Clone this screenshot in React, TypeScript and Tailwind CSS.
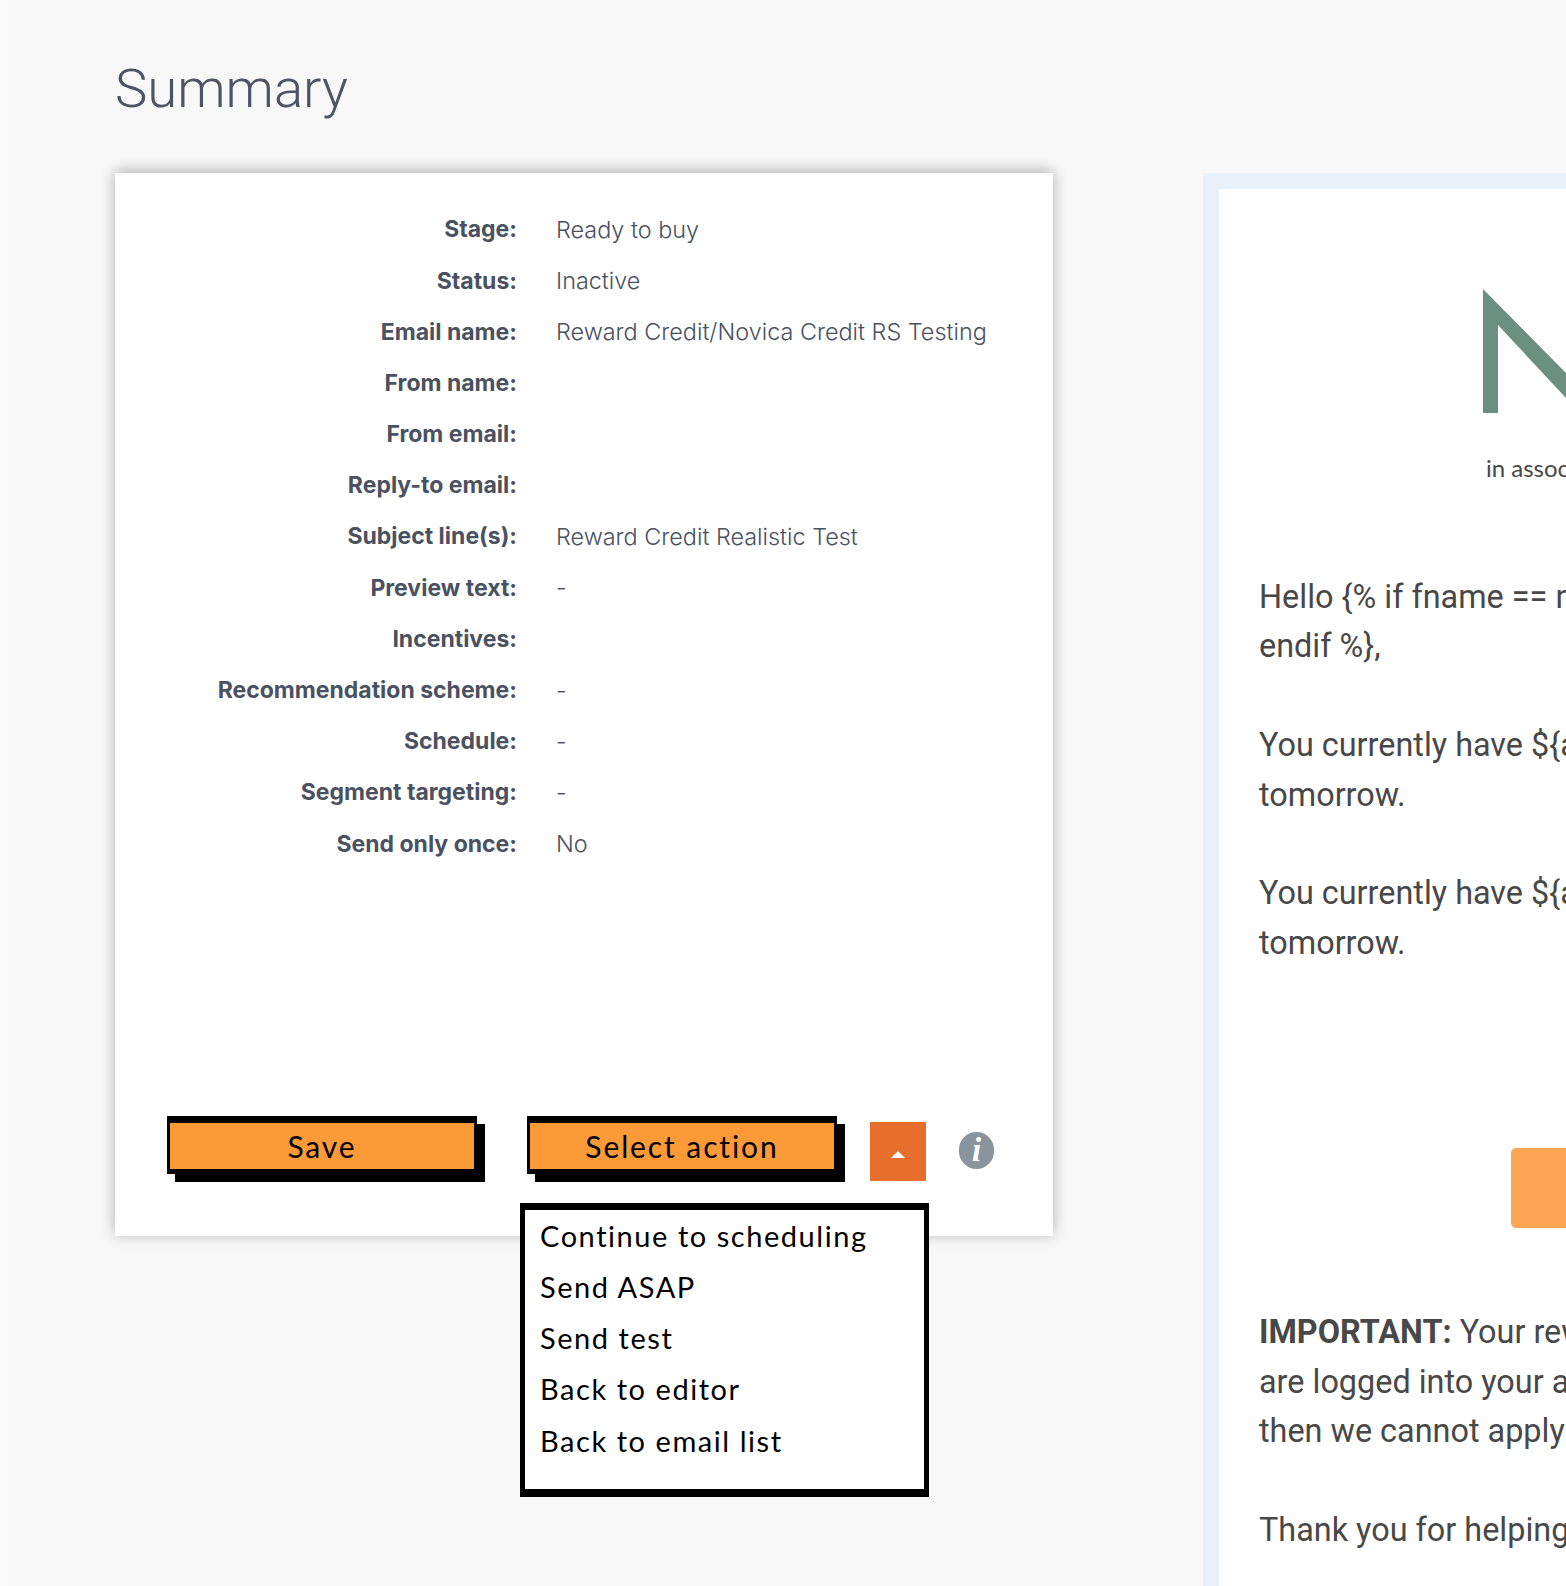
const rows = [
  { label: 'Stage:', value: 'Ready to buy' },
  { label: 'Status:', value: 'Inactive' },
  { label: 'Email name:', value: 'Reward Credit/Novica Credit RS Testing' },
  { label: 'From name:', value: '' },
  { label: 'From email:', value: '' },
  { label: 'Reply-to email:', value: '' },
  { label: 'Subject line(s):', value: 'Reward Credit Realistic Test' },
  { label: 'Preview text:', value: '-' },
  { label: 'Incentives:', value: '' },
  { label: 'Recommendation scheme:', value: '-' },
  { label: 'Schedule:', value: '-' },
  { label: 'Segment targeting:', value: '-' },
  { label: 'Send only once:', value: 'No' },
]

const actions = ['Continue to scheduling', 'Send ASAP', 'Send test', 'Back to editor', 'Back to email list']

function SketchButton({ label, width }: { label: string; width: string }) {
  return (
    <button
      className={`flex h-[58px] ${width} items-center justify-center border-x-[3px] border-t-[7px] border-b-[5px] border-black bg-[#fb9a37] font-['Lato',sans-serif] text-[30px] tracking-[1.9px] text-black shadow-[8px_8px_0_#000]`}
    >
      {label}
    </button>
  )
}

function SummaryCard() {
  return (
    <div className="relative flex h-[1063px] w-[938px] shrink-0 flex-col bg-white pt-[31px] pb-[55px] shadow-[0_-2px_14px_rgba(0,0,0,0.3)]">
      {rows.map((row) => (
        <div key={row.label} className="flex h-[51.2px] items-center">
          <span className="w-[402px] text-right text-[23px] font-bold text-[#4a5160]">{row.label}</span>
          <span className="ml-[39px] text-[23.4px] font-light text-[#4a5160]">{row.value}</span>
        </div>
      ))}

      {/* Actions */}
      <div className="mt-auto flex items-start pl-[52px]">
        <SketchButton label="Save" width="w-[310px]" />
        <div className="ml-[50px]">
          <SketchButton label="Select action" width="w-[310px]" />
        </div>
        <div className="mt-[6px] ml-[33px] flex h-[59px] w-[56px] items-center justify-center bg-[#e76f2b]">
          <span className="mt-[6px] h-0 w-0 border-x-[7px] border-b-[7px] border-x-transparent border-b-white" />
        </div>
        <div className="mt-[16px] ml-[33px] flex h-[37px] w-[35px] items-center justify-center rounded-full bg-[#8a949c] font-['Liberation_Serif',serif] text-[33px] font-bold text-white italic">
          i
        </div>
      </div>

      {/* Select action menu */}
      <div className="absolute top-[1030px] left-[405px] z-10 h-[294px] w-[409px] border-x-[5px] border-t-[7px] border-b-[8px] border-black bg-white pl-[15px] font-['Lato',sans-serif] text-[29px] tracking-[1.55px] text-black">
        {actions.map((action) => (
          <div key={action} className="flex h-[51.2px] items-center">
            {action}
          </div>
        ))}
      </div>
    </div>
  )
}

function EmailPreview() {
  return (
    <div className="h-[1413px] min-w-0 flex-1 overflow-hidden border-t-16 border-l-16 border-[#e8f1f7] bg-white">
      <div className="ml-[264px] pt-[100px]">
        <svg width="83" height="124" viewBox="0 0 83 124" className="block">
          <polygon points="0,0 83,84 83,109 15,36 15,124 0,124" fill="#6b8f80" />
        </svg>
        <p className="mt-[40px] ml-[3px] h-[30px] font-['Lato',sans-serif] text-[24px] leading-[30px] whitespace-nowrap text-[#484848]">
          in association with
        </p>
      </div>

      <div className="ml-[40px] font-['Roboto',sans-serif] text-[32.4px] leading-[49.4px] whitespace-nowrap text-[#484848]">
        <p className="mt-[90px]">Hello {'{'}% if fname == none %{'}'}</p>
        <p>endif %{'}'},</p>
        <p className="mt-[49.4px]">You currently have ${'{'}amount{'}'}</p>
        <p>tomorrow.</p>
        <p className="mt-[49.4px]">You currently have ${'{'}amount{'}'}</p>
        <p>tomorrow.</p>
      </div>

      <div className="mt-[180px] ml-[292px] h-[80px] w-[300px] rounded-[5px] bg-[#fba652]" />

      <div className="mt-[80px] ml-[40px] font-['Roboto',sans-serif] text-[32.4px] leading-[49.4px] whitespace-nowrap text-[#484848]">
        <p>
          <strong className="font-bold">IMPORTANT:</strong> Your reward
        </p>
        <p>are logged into your account</p>
        <p>then we cannot apply</p>
        <p className="mt-[49.4px]">Thank you for helping</p>
      </div>
    </div>
  )
}

export default function App() {
  return (
    <div className="h-[1586px] overflow-hidden bg-[#fbfbfb] pl-2 font-['Inter',sans-serif]">
      <div className="h-full bg-[#f8f8f9] pl-[107px]">
        <h1 className="h-[173px] pt-[49px] font-['Roboto',sans-serif] text-[54.5px] leading-[78px] font-light text-[#4d5564]">
          Summary
        </h1>
        <div className="flex gap-[150px]">
          <SummaryCard />
          <EmailPreview />
        </div>
      </div>
    </div>
  )
}
